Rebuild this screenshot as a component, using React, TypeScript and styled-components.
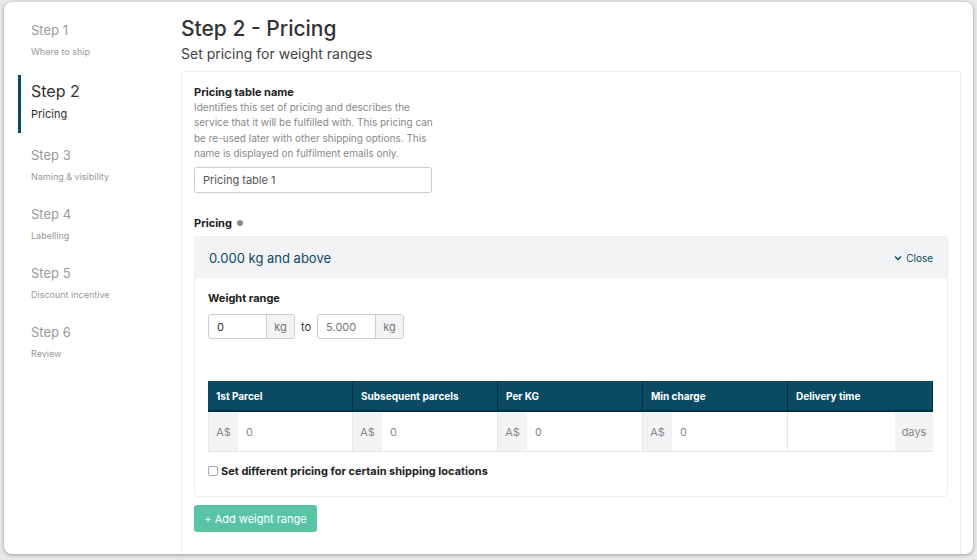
import React from "react";
import styled, { createGlobalStyle } from "styled-components";

const G = createGlobalStyle`
  html,body{margin:0;padding:0;background:#e9eaeb;}
  body{font-family:Inter,"Noto Sans",sans-serif;color:#333;}
  *{box-sizing:border-box;}
`;
const Outer = styled.div`width:977px;height:560px;padding:2px 4px 6px 4px;overflow:hidden;`;
const Win = styled.div`
  height:552px;background:#fff;border-radius:8px;box-shadow:0 1px 4px rgba(0,0,0,.35);
  display:flex;overflow:hidden;
`;
const Side = styled.nav`width:177px;padding-top:20px;display:flex;flex-direction:column;`;
const StepItem = styled.div<{ $active?: boolean }>`
  padding:${p => p.$active ? "6px 0 12px 10px" : "0 0 0 13px"};
  margin:${p => p.$active ? "0 0 14px 14px" : "0 0 24px 14px"};
  border-left:${p => p.$active ? "3px solid #0b4a63" : "none"};
  &:first-child{margin-bottom:18px;}
`;
const StepTitle = styled.div<{ $active?: boolean }>`
  font-size:${p => p.$active ? "16px" : "13px"};color:${p => p.$active ? "#333" : "#999"};
  margin-bottom:${p => p.$active ? "6px" : "8px"};
`;
const StepSub = styled.div<{ $active?: boolean }>`
  font-size:${p => p.$active ? "11px" : "9px"};color:${p => p.$active ? "#333" : "#999"};
`;
const Main = styled.main`flex:1;padding:14px 12px 0 0;display:flex;flex-direction:column;`;
const H1 = styled.h1`margin:0;font-size:21px;line-height:26px;font-weight:500;color:#333;`;
const Sub = styled.div`font-size:14px;line-height:18px;color:#444;margin:3px 0 8px;`;
const Card = styled.section`
  flex:1;border:1px solid #eee;border-bottom:none;border-radius:3px 3px 0 0;padding:13px 12px 0 12px;
`;
const Label = styled.div`font-size:11px;line-height:14px;font-weight:700;color:#222;display:flex;align-items:center;gap:5px;`;
const Help = styled.p`margin:1px 0 6px;font-size:10px;line-height:15.3px;color:#888;width:240px;`;
const TextInput = styled.div`
  width:238px;height:26px;border:1px solid #ccc;border-radius:3px;padding:0 8px;
  font-size:11px;color:#555;display:flex;align-items:center;margin-bottom:23px;
`;
const Dot = styled.span`width:6px;height:6px;border-radius:50%;background:#888;display:inline-block;`;
const Acc = styled.div`margin-top:6px;border:1px solid #eee;border-radius:3px;`;
const AccHead = styled.div`
  height:41px;background:#f2f3f4;display:flex;align-items:center;justify-content:space-between;padding:0 14px;
`;
const AccTitle = styled.div`font-size:13px;color:#0b4a63;`;
const CloseBtn = styled.div`font-size:10px;color:#0b4a63;display:flex;align-items:center;gap:4px;`;
const AccBody = styled.div`padding:13px 14px 18px 13px;`;
const Row = styled.div`display:flex;align-items:center;gap:6px;margin-top:9px;`;
const Addon = styled.div`display:flex;border:1px solid #ccc;border-radius:3px;height:25px;overflow:hidden;`;
const AddIn = styled.div<{ $muted?: boolean }>`
  width:57px;padding:0 8px;display:flex;align-items:center;font-size:11px;color:${p => p.$muted ? "#777" : "#333"};
`;
const AddOn = styled.div`width:28px;background:#f2f3f4;border-left:1px solid #ccc;font-size:11px;color:#777;display:flex;align-items:center;justify-content:center;`;
const To = styled.span`font-size:11px;`;
const Table = styled.div`margin-top:42px;display:grid;grid-template-columns:repeat(5,1fr);`;
const Th = styled.div`
  height:31px;background:#0b4a63;color:#fff;font-size:10px;font-weight:700;display:flex;align-items:center;padding-left:8px;
  border-right:1px solid #05303f;border-bottom:2px solid #05303f;&:last-child{border-right:none;}
`;
const Td = styled.div`height:40px;display:flex;border-bottom:1px solid #e6e6e6;border-right:1px solid #e6e6e6;&:nth-child(5n){border-right:none;}&:nth-child(5n+1){border-left:1px solid #e6e6e6}`;
const Cur = styled.div<{ $w?: number }>`width:${p => p.$w ?? 29}px;background:#f2f3f4;color:#888;font-size:11px;display:flex;align-items:center;justify-content:center;`;
const Val = styled.div`flex:1;padding-left:8px;font-size:11px;color:#888;display:flex;align-items:center;`;
const Check = styled.label`display:flex;align-items:center;gap:3px;margin-top:12px;font-size:11px;font-weight:700;color:#222;`;
const Box = styled.span`width:10px;height:10px;border:1px solid #aaa;border-radius:2px;`;
const AddBtn = styled.button`
  margin:8px 0 0 0;width:123px;height:27px;border:none;border-radius:3px;background:#58c4a4;color:#fff;
  font-family:inherit;font-size:11px;display:flex;align-items:center;justify-content:center;gap:5px;
`;

const steps = [["Step 1", "Where to ship"], ["Step 2", "Pricing"], ["Step 3", "Naming & visibility"], ["Step 4", "Labelling"], ["Step 5", "Discount incentive"], ["Step 6", "Review"]];
const heads = ["1st Parcel", "Subsequent parcels", "Per KG", "Min charge", "Delivery time"];

export default function App() {
  return (
    <Outer><G />
      <Win>
        <Side>
          {steps.map(([t, s], i) => (
            <StepItem key={t} $active={i === 1}>
              <StepTitle $active={i === 1}>{t}</StepTitle>
              <StepSub $active={i === 1}>{s}</StepSub>
            </StepItem>
          ))}
        </Side>
        <Main>
          <H1>Step 2 - Pricing</H1>
          <Sub>Set pricing for weight ranges</Sub>
          <Card>
            <Label>Pricing table name</Label>
            <Help>Identifies this set of pricing and describes the service that it will be fulfilled with. This pricing can be re-used later with other shipping options. This name is displayed on fulfilment emails only.</Help>
            <TextInput>Pricing table 1</TextInput>
            <Label>Pricing <Dot /></Label>
            <Acc>
              <AccHead>
                <AccTitle>0.000 kg and above</AccTitle>
                <CloseBtn>
                  <svg width="8" height="6" viewBox="0 0 8 6"><path d="M1 1.5l3 3 3-3" fill="none" stroke="#0b4a63" strokeWidth="1.4" /></svg>
                  Close
                </CloseBtn>
              </AccHead>
              <AccBody>
                <Label>Weight range</Label>
                <Row>
                  <Addon><AddIn>0</AddIn><AddOn>kg</AddOn></Addon>
                  <To>to</To>
                  <Addon><AddIn $muted>5.000</AddIn><AddOn>kg</AddOn></Addon>
                </Row>
                <Table>
                  {heads.map(h => <Th key={h}>{h}</Th>)}
                  {[0, 1, 2, 3].map(i => <Td key={i}><Cur>A$</Cur><Val>0</Val></Td>)}
                  <Td><Val /><Cur $w={38}>days</Cur></Td>
                </Table>
                <Check><Box />Set different pricing for certain shipping locations</Check>
              </AccBody>
            </Acc>
            <AddBtn>+ Add weight range</AddBtn>
          </Card>
        </Main>
      </Win>
    </Outer>
  );
}
